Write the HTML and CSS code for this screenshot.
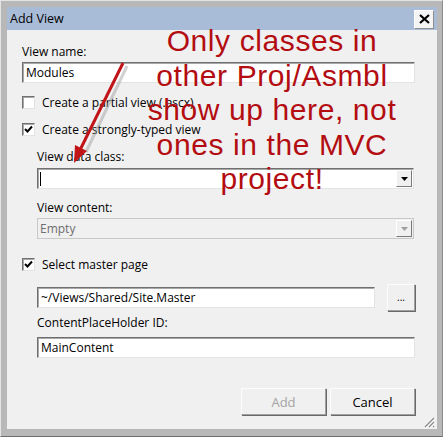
FILE: index.html
```html
<!DOCTYPE html>
<html lang="en">
<head>
    <meta charset="UTF-8">
    <title>Add View</title>
    <link rel="stylesheet" href="styles.css">
</head>
<body>
    <div class="frame">
        <div class="window">
            <div class="title-bar">
                <span class="title">Add View</span>
                <button class="close-btn">
                    <svg width="11" height="10" viewBox="0 0 11 10"><path d="M1 1 L10 9 M10 1 L1 9" stroke="#000" stroke-width="2.2"/></svg>
                </button>
            </div>

            <div class="content">
                <div class="label first">View name:</div>
                <div class="field">Modules</div>

                <div class="check-row row-partial">
                    <span class="check"></span>
                    <span>Create a partial view (.ascx)</span>
                </div>
                <div class="check-row row-typed">
                    <span class="check">
                        <svg width="11" height="11" viewBox="0 0 11 11"><path d="M2 5 L4.5 7.5 L9 2.5" fill="none" stroke="#000" stroke-width="2"/></svg>
                    </span>
                    <span>Create a strongly-typed view</span>
                </div>

                <div class="group">
                    <div class="label gap-12">View data class:</div>
                    <div class="combo combo-class">
                        <span class="caret-text"></span>
                        <span class="drop"><svg width="7" height="4" viewBox="0 0 7 4"><path d="M0 0 H7 L3.5 4 Z" fill="#000"/></svg></span>
                    </div>

                    <div class="label gap-11">View content:</div>
                    <div class="combo combo-content disabled">
                        <span>Empty</span>
                        <span class="drop"><svg width="7" height="4" viewBox="0 0 7 4"><path d="M0 0 H7 L3.5 4 Z" fill="#a0a0a0"/></svg></span>
                    </div>
                </div>

                <div class="check-row row-master">
                    <span class="check">
                        <svg width="11" height="11" viewBox="0 0 11 11"><path d="M2 5 L4.5 7.5 L9 2.5" fill="none" stroke="#000" stroke-width="2"/></svg>
                    </span>
                    <span>Select master page</span>
                </div>

                <div class="group">
                    <div class="master-row">
                        <div class="field master-field">~/Views/Shared/Site.Master</div>
                        <button class="btn browse-btn">...</button>
                    </div>
                    <div class="label gap-4">ContentPlaceHolder ID:</div>
                    <div class="field holder-field">MainContent</div>
                </div>

                <div class="actions">
                    <button class="btn action-btn disabled">Add</button>
                    <button class="btn action-btn">Cancel</button>
                </div>
            </div>

            <svg class="grip" width="12" height="12" viewBox="0 0 12 12">
                <path d="M11 2 L2 11 M11 6 L6 11 M11 10 L10 11" stroke="#8a8a8a" stroke-width="1.2"/>
                <path d="M12 3 L3 12 M12 7 L7 12" stroke="#ffffff" stroke-width="1"/>
            </svg>
        </div>

        <div class="note">
            Only classes in<br>
            other Proj/Asmbl<br>
            show up here, not<br>
            ones in the MVC<br>
            project!
        </div>

        <svg class="arrow" width="443" height="437" viewBox="0 0 443 437">
            <line x1="127" y1="66" x2="86" y2="152" stroke="#9a9a9a" stroke-width="3" opacity="0.45"/>
            <line x1="123" y1="63" x2="80" y2="150" stroke="#c01418" stroke-width="3"/>
            <path d="M74 163 L87 151 L75 145 Z" fill="#c01418"/>
        </svg>
    </div>
</body>
</html>
```

FILE: styles.css
```css
* {
    margin: 0;
    padding: 0;
    box-sizing: border-box;
}

body {
    width: 443px;
    height: 437px;
    font-family: 'Open Sans', 'DejaVu Sans', sans-serif;
    font-size: 12px;
    color: #000;
    background: #dcdcdc;
}

.frame {
    position: relative;
    width: 443px;
    height: 437px;
    border: 1px solid #e4e4e4;
    border-right-color: #8c8c8c;
    border-bottom-color: #6e6e6e;
}

.window {
    position: relative;
    width: 100%;
    height: 100%;
    border-style: solid;
    border-color: #b8b8b8;
    border-width: 6px 5px 7px 6px;
    background: #f0f0f0;
    display: flex;
    flex-direction: column;
}

.title-bar {
    height: 23px;
    background: #a9bcd7;
    display: flex;
    align-items: center;
    justify-content: space-between;
    padding: 0 3px 0 3px;
}

.title {
    font-size: 12.5px;
    color: #000;
}

.close-btn {
    width: 20px;
    height: 19px;
    margin-top: 1px;
    background: #f4f4f4;
    border: 1px solid #fff;
    border-right-color: #8e8e8e;
    border-bottom-color: #8e8e8e;
    display: flex;
    align-items: center;
    justify-content: center;
}

.content {
    flex: 1;
    display: flex;
    flex-direction: column;
    padding: 14px 22px 0 15px;
}

.label {
    line-height: 16px;
    height: 16px;
}

.label.gap-12 { margin-top: 12px; }
.label.gap-11 { margin-top: 11px; }
.label.gap-4 { margin-top: 4px; }

.field,
.combo {
    height: 21px;
    background: #fff;
    border: 1px solid #e3e3e3;
    border-top-color: #6f6f6f;
    border-left-color: #6f6f6f;
    box-shadow: inset 1px 1px 0 #a8a8a8;
    padding: 0 3px;
    line-height: 19px;
    white-space: nowrap;
    overflow: hidden;
}

.first + .field {
    margin-top: 2px;
}

.check-row {
    display: flex;
    align-items: center;
    gap: 7px;
    height: 16px;
}

.row-partial { margin-top: 11px; }
.row-typed { margin-top: 11px; }
.row-master { margin-top: 17px; }

.check {
    width: 13px;
    height: 13px;
    background: #fff;
    border: 1px solid #e3e3e3;
    border-top-color: #707070;
    border-left-color: #707070;
    box-shadow: inset 1px 1px 0 #a8a8a8;
    display: flex;
    align-items: center;
    justify-content: center;
}

.group {
    margin-left: 15px;
    display: flex;
    flex-direction: column;
}

.combo {
    display: flex;
    justify-content: space-between;
    align-items: center;
    padding: 0 1px 0 2px;
    margin-right: 1px;
}

.combo-class { margin-top: 3px; }
.combo-content { margin-top: 2px; }

.caret-text {
    width: 1px;
    height: 14px;
    background: #000;
}

.combo.disabled {
    background: #f0f0f0;
    border-color: #c8c8c8;
    box-shadow: none;
    color: #6d6d6d;
}

.drop {
    width: 16px;
    height: 17px;
    background: #f0f0f0;
    border: 1px solid #fff;
    border-right-color: #7a7a7a;
    border-bottom-color: #7a7a7a;
    display: flex;
    align-items: center;
    justify-content: center;
}

.row-master + .group {
    margin-top: 11px;
}

.master-row {
    display: flex;
    align-items: center;
    justify-content: space-between;
    height: 28px;
}

.master-field {
    width: 338px;
    margin-top: 1px;
}

.btn {
    font-family: inherit;
    font-size: 12px;
    color: #000;
    background: #f0f0f0;
    border: 1px solid #fcfcfc;
    border-right-color: #a0a0a0;
    border-bottom-color: #a0a0a0;
    box-shadow: 1px 1px 0 #696969;
}

.browse-btn {
    width: 28px;
    height: 27px;
    font-size: 10px;
}

.holder-field {
    margin-top: 6px;
}

.actions {
    display: flex;
    justify-content: flex-end;
    gap: 4px;
    margin-top: 30px;
}

.action-btn {
    width: 85px;
    height: 27px;
    font-size: 13px;
}

.action-btn.disabled {
    color: #a3a3a3;
}

.grip {
    position: absolute;
    right: 2px;
    bottom: 1px;
}

.note {
    position: absolute;
    left: 121px;
    top: 23px;
    width: 300px;
    text-align: center;
    font-family: 'Liberation Sans', Arial, sans-serif;
    font-size: 30px;
    letter-spacing: 0.6px;
    line-height: 34.5px;
    color: #b30d12;
    pointer-events: none;
}

.arrow {
    position: absolute;
    left: -1px;
    top: -1px;
    pointer-events: none;
}
```
